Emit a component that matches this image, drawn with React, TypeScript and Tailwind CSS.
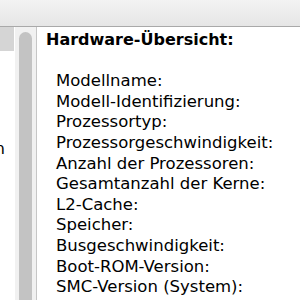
const items = [
  "Modellname:",
  "Modell-Identifizierung:",
  "Prozessortyp:",
  "Prozessorgeschwindigkeit:",
  "Anzahl der Prozessoren:",
  "Gesamtanzahl der Kerne:",
  "L2-Cache:",
  "Speicher:",
  "Busgeschwindigkeit:",
  "Boot-ROM-Version:",
  "SMC-Version (System):",
];

export default function App() {
  return (
    <div className="w-[300px] h-[300px] overflow-hidden bg-white flex flex-col font-['DejaVu_Sans',sans-serif] text-black">
      {/* toolbar */}
      <div className="h-[27px] shrink-0 bg-gradient-to-b from-[#f3f3f3] to-[#e6e6e6] border-b border-[#a9a9a9]" />
      <div className="flex flex-1 min-h-0">
        {/* sidebar list, mostly cut off */}
        <div className="w-[14px] shrink-0 overflow-hidden flex flex-col">
          <div className="h-[24px] bg-[#d5d5d5]" />
          <div className="mt-[88px] flex justify-end text-[16px] leading-[20px] whitespace-nowrap">
            <span className="mr-[9px]">Brennen</span>
          </div>
        </div>
        {/* scrollbar */}
        <div className="w-[23px] shrink-0 bg-[#f1f1f1] border-l border-white border-r border-r-[#c6c6c6] px-[4px] pt-[5px]">
          <div className="h-full rounded-t-full bg-[#c3c3c3]" />
        </div>
        {/* detail pane */}
        <div className="flex-1 pl-[9px] pt-[3px] text-[16px] leading-[20.6px] whitespace-nowrap">
          <div className="font-bold">Hardware-Übersicht:</div>
          <div className="h-[20.6px]" />
          <div className="pl-[10px] text-[16.5px]">
            {items.map((t) => (
              <div key={t}>{t}</div>
            ))}
          </div>
        </div>
      </div>
    </div>
  );
}
